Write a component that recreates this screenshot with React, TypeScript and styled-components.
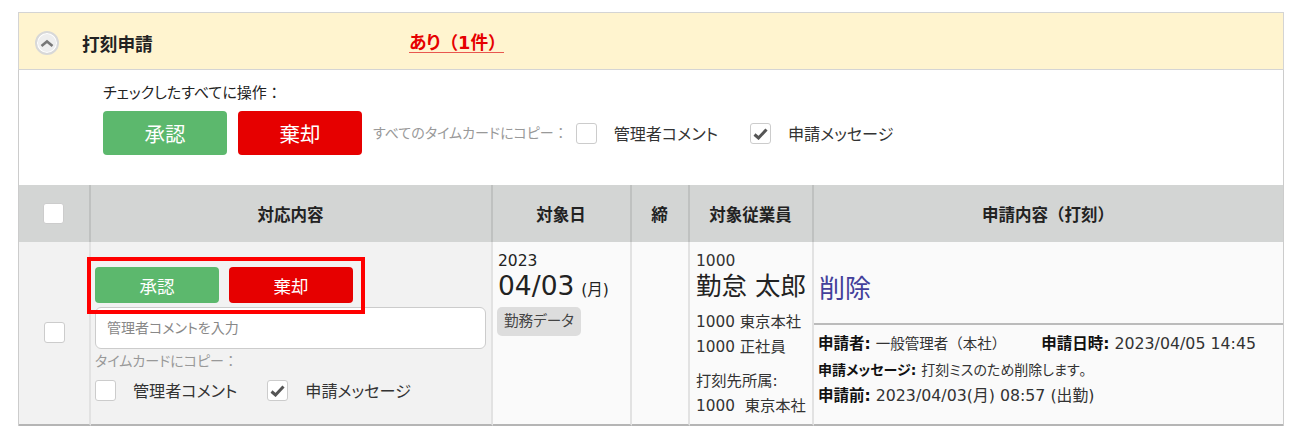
import styled, { createGlobalStyle } from 'styled-components';

const GlobalStyle = createGlobalStyle`
  html, body {
    margin: 0;
    padding: 0;
    background: #fff;
  }
  body {
    font-family: "DejaVu Sans", "Noto Sans CJK JP", sans-serif;
    font-feature-settings: "palt";
    color: #222;
    font-size: 16px;
  }
  * {
    box-sizing: border-box;
  }
`;

const Panel = styled.section`
  width: 1266px;
  margin: 12px 0 0 18px;
  border-left: 1px solid #ccc;
  border-right: 1px solid #ccc;
`;

const PanelHeader = styled.header`
  display: flex;
  align-items: center;
  height: 58px;
  margin: 0 -1px;
  padding: 4px 0 0 16px;
  background: #fff4cf;
  border: 1px solid #d4d4d4;
`;

const Toggle = styled.span`
  display: flex;
  align-items: center;
  justify-content: center;
  width: 24px;
  height: 24px;
  border-radius: 50%;
  background: #eee;
  border: 2px solid #d8d8d8;
  box-shadow: inset 0 0 0 1px #fff;
`;

const PanelTitle = styled.h2`
  width: 327px;
  margin: 0 0 0 23px;
  font-size: 17.7px;
  font-weight: 700;
  color: #222;
`;

const Status = styled.span`
  width: 95px;
  font-size: 17.7px;
  font-weight: 700;
  color: #e60000;
  border-bottom: 1px solid #e8574f;
  line-height: 18px;
  white-space: nowrap;
`;

// full-width parens and colons keep their width, only kana stay proportional
const Wide = styled.span`
  font-feature-settings: normal;
`;

const Bulk = styled.div`
  height: 115px;
  padding: 12px 0 0 84px;
`;

const BulkLabel = styled.div`
  font-size: 15px;
  line-height: 22px;
  margin-bottom: 7px;
`;

const BulkRow = styled.div`
  display: flex;
  align-items: center;
`;

const ActionButton = styled.button<{ $tone: 'ok' | 'ng'; $large?: boolean }>`
  width: 124px;
  height: ${p => (p.$large ? '44px' : '36px')};
  margin-right: ${p => (p.$large ? '11px' : '10px')};
  border: none;
  border-radius: 4px;
  padding: 0;
  font-family: inherit;
  font-feature-settings: inherit;
  font-size: ${p => (p.$large ? '20.5px' : '17.5px')};
  color: #fff;
  background: ${p => (p.$tone === 'ok' ? '#5cb86d' : '#e60000')};
`;

const CopyHint = styled.span<{ $block?: boolean }>`
  display: ${p => (p.$block ? 'block' : 'inline')};
  color: #999;
  font-size: 14px;
  line-height: 20px;
`;

const BulkHint = styled(CopyHint)`
  margin-right: 8px;
`;

const CheckLabel = styled.label<{ $gap: number }>`
  display: inline-flex;
  align-items: center;
  margin-right: ${p => p.$gap}px;
  font-size: 16.1px;
  color: #333;
`;

const Box = styled.span`
  display: inline-flex;
  align-items: center;
  justify-content: center;
  width: 21px;
  height: 21px;
  margin-right: 17px;
  background: #fff;
  border: 1px solid #ccc;
  border-radius: 3px;
`;

const Grid = styled.div`
  display: grid;
  grid-template-columns: 72px 402px 139px 58px 124px 1fr;
`;

const HeadCell = styled.div<{ $last?: boolean }>`
  display: flex;
  align-items: center;
  justify-content: center;
  height: 57px;
  padding-right: 1px;
  background: #d3d5d4;
  border-right: ${p => (p.$last ? 'none' : '2px solid #bfc1c0')};
  font-size: 16.5px;
  font-weight: 700;
  color: #222;
`;

const BodyCell = styled.div<{ $shade?: boolean; $last?: boolean }>`
  height: 184px;
  background: ${p => (p.$shade ? '#f2f2f2' : '#fafafa')};
  border-right: ${p => (p.$last ? 'none' : '2px solid #e2e2e2')};
  border-bottom: 2px solid #b5b5b5;
`;

const CheckCell = styled(BodyCell)`
  display: flex;
  align-items: center;
  justify-content: center;
  padding-bottom: 2px;
`;

const HeadBox = styled(Box)`
  margin: 0;
`;

const ResponseCell = styled(BodyCell)`
  padding: 25px 4px 0 4px;
`;

const ButtonRow = styled.div`
  position: relative;
  display: flex;
  margin-bottom: 4px;
`;

const Highlight = styled.div`
  position: absolute;
  top: -10px;
  left: -8px;
  width: 278px;
  height: 57px;
  border: 4px solid #f00;
`;

const CommentInput = styled.input`
  display: block;
  width: 391px;
  height: 42px;
  padding: 0 11px;
  background: #fff;
  border: 1px solid #ccc;
  border-radius: 6px;
  font-family: inherit;
  font-feature-settings: inherit;
  font-size: 14px;

  &::placeholder {
    color: #888;
    opacity: 1;
  }
`;

const CopyBlock = styled.div`
  margin-top: 2px;
`;

const CopyChecks = styled.div`
  display: flex;
  margin-top: 7px;
`;

const DateCell = styled(BodyCell)`
  padding: 9px 5px 0;
`;

const Year = styled.div`
  font-size: 15.5px;
  line-height: 20px;
`;

const DateLine = styled.div`
  font-size: 26.5px;
  line-height: 30px;
  color: #222;
`;

const Weekday = styled.span`
  font-size: 15.5px;
  margin-left: 2px;
`;

const Tag = styled.span`
  display: inline-block;
  margin-top: 2px;
  margin-left: -1px;
  padding: 0 7px;
  height: 29px;
  line-height: 27px;
  font-size: 14.6px;
  color: #444;
  background: #ddd;
  border-radius: 5px;
`;

const EmployeeCell = styled(BodyCell)`
  padding: 9px 0 0 6px;
  color: #333;
`;

const EmployeeName = styled.div`
  font-size: 25.5px;
  line-height: 30px;
  margin-bottom: 9px;
  color: #222;
`;

const EmpLine = styled.div<{ $gapTop?: boolean }>`
  font-size: 15.3px;
  line-height: 25px;
  white-space: nowrap;
  margin-top: ${p => (p.$gapTop ? '9px' : '0')};
`;

const DetailCell = styled(BodyCell)`
  display: flex;
  flex-direction: column;
`;

const DetailTop = styled.div`
  height: 83px;
  padding: 29px 0 0 5px;
  border-bottom: 2px solid #bbb;
  font-size: 26px;
  line-height: 36px;
  color: #43409a;
`;

const DetailBottom = styled.div`
  padding: 6px 0 0 4px;
  font-size: 15.8px;
  color: #333;
`;

const DetailLine = styled.div`
  line-height: 25px;
  white-space: nowrap;
`;

const Strong = styled.b<{ $left?: number; $size?: number }>`
  font-weight: 700;
  font-size: ${p => p.$size ?? 15.5}px;
  color: #111;
  margin-left: ${p => p.$left ?? 0}px;
  margin-right: 5px;
`;

const SmallText = styled.span<{ $size?: number }>`
  font-size: ${p => p.$size ?? 14.5}px;
`;

const CheckIcon = () => (
  <svg width="15" height="13" viewBox="0 0 15 13">
    <path d="M1.5 7.5 L5.5 11 L13.5 2.5" fill="none" stroke="#555" strokeWidth="3" />
  </svg>
);

export default function App() {
  return (
    <>
      <GlobalStyle />
      <Panel>
        <PanelHeader>
          <Toggle>
            <svg width="14" height="9" viewBox="0 0 14 9">
              <path d="M1.5 7 L7 2.5 L12.5 7" fill="none" stroke="#777" strokeWidth="2.6" />
            </svg>
          </Toggle>
          <PanelTitle>打刻申請</PanelTitle>
          <Status>あり<Wide>（</Wide>1件<Wide>）</Wide></Status>
        </PanelHeader>
        <Bulk>
          <BulkLabel>チェックしたすべてに操作<Wide>：</Wide></BulkLabel>
          <BulkRow>
            <ActionButton $tone="ok" $large>承認</ActionButton>
            <ActionButton $tone="ng" $large>棄却</ActionButton>
            <BulkHint>すべてのタイムカードにコピー<Wide>：</Wide></BulkHint>
            <CheckLabel $gap={32}><Box />管理者コメント</CheckLabel>
            <CheckLabel $gap={0}><Box><CheckIcon /></Box>申請メッセージ</CheckLabel>
          </BulkRow>
        </Bulk>
        <Grid>
          <HeadCell><HeadBox /></HeadCell>
          <HeadCell>対応内容</HeadCell>
          <HeadCell>対象日</HeadCell>
          <HeadCell>締</HeadCell>
          <HeadCell>対象従業員</HeadCell>
          <HeadCell $last>申請内容<Wide>（</Wide>打刻<Wide>）</Wide></HeadCell>

          <CheckCell $shade><HeadBox /></CheckCell>
          <ResponseCell $shade>
            <ButtonRow>
              <ActionButton $tone="ok">承認</ActionButton>
              <ActionButton $tone="ng">棄却</ActionButton>
              <Highlight />
            </ButtonRow>
            <CommentInput placeholder="管理者コメントを入力" readOnly />
            <CopyBlock>
              <CopyHint $block>タイムカードにコピー<Wide>：</Wide></CopyHint>
              <CopyChecks>
                <CheckLabel $gap={30}><Box />管理者コメント</CheckLabel>
                <CheckLabel $gap={0}><Box><CheckIcon /></Box>申請メッセージ</CheckLabel>
              </CopyChecks>
            </CopyBlock>
          </ResponseCell>
          <DateCell>
            <Year>2023</Year>
            <DateLine>04/03<Weekday> (月)</Weekday></DateLine>
            <Tag>勤務データ</Tag>
          </DateCell>
          <BodyCell />
          <EmployeeCell>
            <Year>1000</Year>
            <EmployeeName>勤怠 太郎</EmployeeName>
            <EmpLine>1000 東京本社</EmpLine>
            <EmpLine>1000 正社員</EmpLine>
            <EmpLine $gapTop>打刻先所属:</EmpLine>
            <EmpLine>1000&nbsp; 東京本社</EmpLine>
          </EmployeeCell>
          <DetailCell $last>
            <DetailTop>削除</DetailTop>
            <DetailBottom>
              <DetailLine>
                <Strong>申請者:</Strong><SmallText>一般管理者<Wide>（</Wide>本社<Wide>）</Wide></SmallText>
                <Strong $left={35}>申請日時:</Strong>2023/04/05 14:45
              </DetailLine>
              <DetailLine>
                <Strong $size={14}>申請メッセージ:</Strong><SmallText $size={14}>打刻ミスのため削除します<Wide>。</Wide></SmallText>
              </DetailLine>
              <DetailLine>
                <Strong>申請前:</Strong>2023/04/03(月) 08:57 (出勤)
              </DetailLine>
            </DetailBottom>
          </DetailCell>
        </Grid>
      </Panel>
    </>
  );
}
